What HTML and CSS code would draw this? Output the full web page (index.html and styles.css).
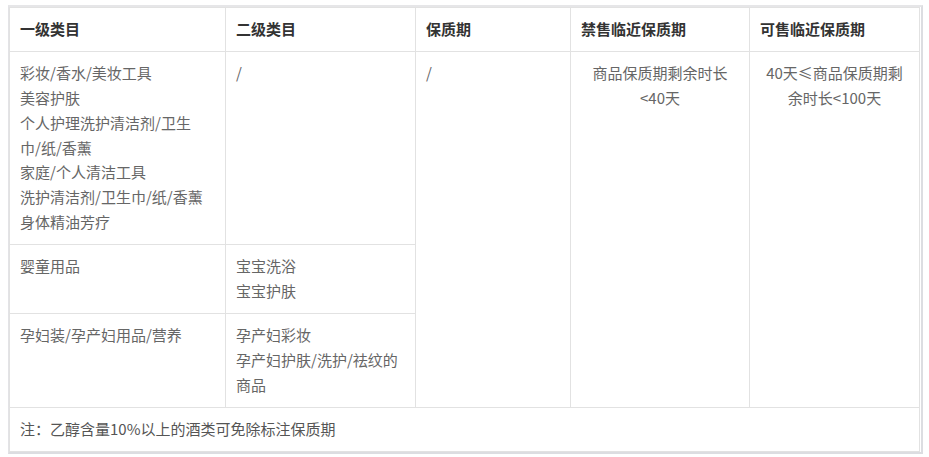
FILE: index.html
```html
<!DOCTYPE html>
<html lang="zh-CN">
<head>
<meta charset="utf-8">
<title>保质期规则</title>
<link rel="stylesheet" href="styles.css">
</head>
<body>
<div class="wrap">
  <table class="rules">
    <colgroup>
      <col class="c1"><col class="c2"><col class="c3"><col class="c4"><col class="c5">
    </colgroup>
    <thead>
      <tr>
        <th>一级类目</th>
        <th>二级类目</th>
        <th>保质期</th>
        <th>禁售临近保质期</th>
        <th>可售临近保质期</th>
      </tr>
    </thead>
    <tbody>
      <tr>
        <td>彩妆/香水/美妆工具<br>美容护肤<br>个人护理洗护清洁剂/卫生<br>巾/纸/香薰<br>家庭/个人清洁工具<br>洗护清洁剂/卫生巾/纸/香薰<br>身体精油芳疗</td>
        <td>/</td>
        <td rowspan="3">/</td>
        <td rowspan="3" class="center">商品保质期剩余时长<br>&lt;40天</td>
        <td rowspan="3" class="center">40天≤商品保质期剩<br>余时长&lt;100天</td>
      </tr>
      <tr>
        <td>婴童用品</td>
        <td>宝宝洗浴<br>宝宝护肤</td>
      </tr>
      <tr>
        <td>孕妇装/孕产妇用品/营养</td>
        <td>孕产妇彩妆<br>孕产妇护肤/洗护/祛纹的<br>商品</td>
      </tr>
      <tr>
        <td colspan="5" class="note">注：乙醇含量10%以上的酒类可免除标注保质期</td>
      </tr>
    </tbody>
  </table>
</div>
</body>
</html>
```

FILE: styles.css
```css
html, body {
  margin: 0;
  padding: 0;
  background: #ffffff;
}

body {
  font-family: "Noto Sans CJK SC", "Noto Sans", sans-serif;
  font-size: 15px;
  color: #666666;
}

.wrap {
  display: inline-block;
  margin: 5px 0 0 8px;
  border-top: 2px solid #e6e6e8;
  border-left: 1px solid #e3e3e6;
  border-bottom: 2px solid #dcdde1;
  border-right: 2px solid #dcdde1;
  padding: 0 1px 0 0;
}

.rules {
  border-collapse: collapse;
  table-layout: fixed;
  width: 910px;
}

.c1 { width: 216px; }
.c2 { width: 190px; }
.c3 { width: 155px; }
.c4 { width: 179px; }
.c5 { width: 170px; }

.rules th,
.rules td {
  border: 1px solid #e2e2e2;
  padding: 9px 10px 9.2px;
  line-height: 24.85px;
  text-align: left;
  vertical-align: top;
  white-space: nowrap;
}

.rules th {
  font-weight: 700;
  color: #333333;
}

.rules td.center {
  text-align: center;
}

.rules td.note {
  color: #555555;
}
```
